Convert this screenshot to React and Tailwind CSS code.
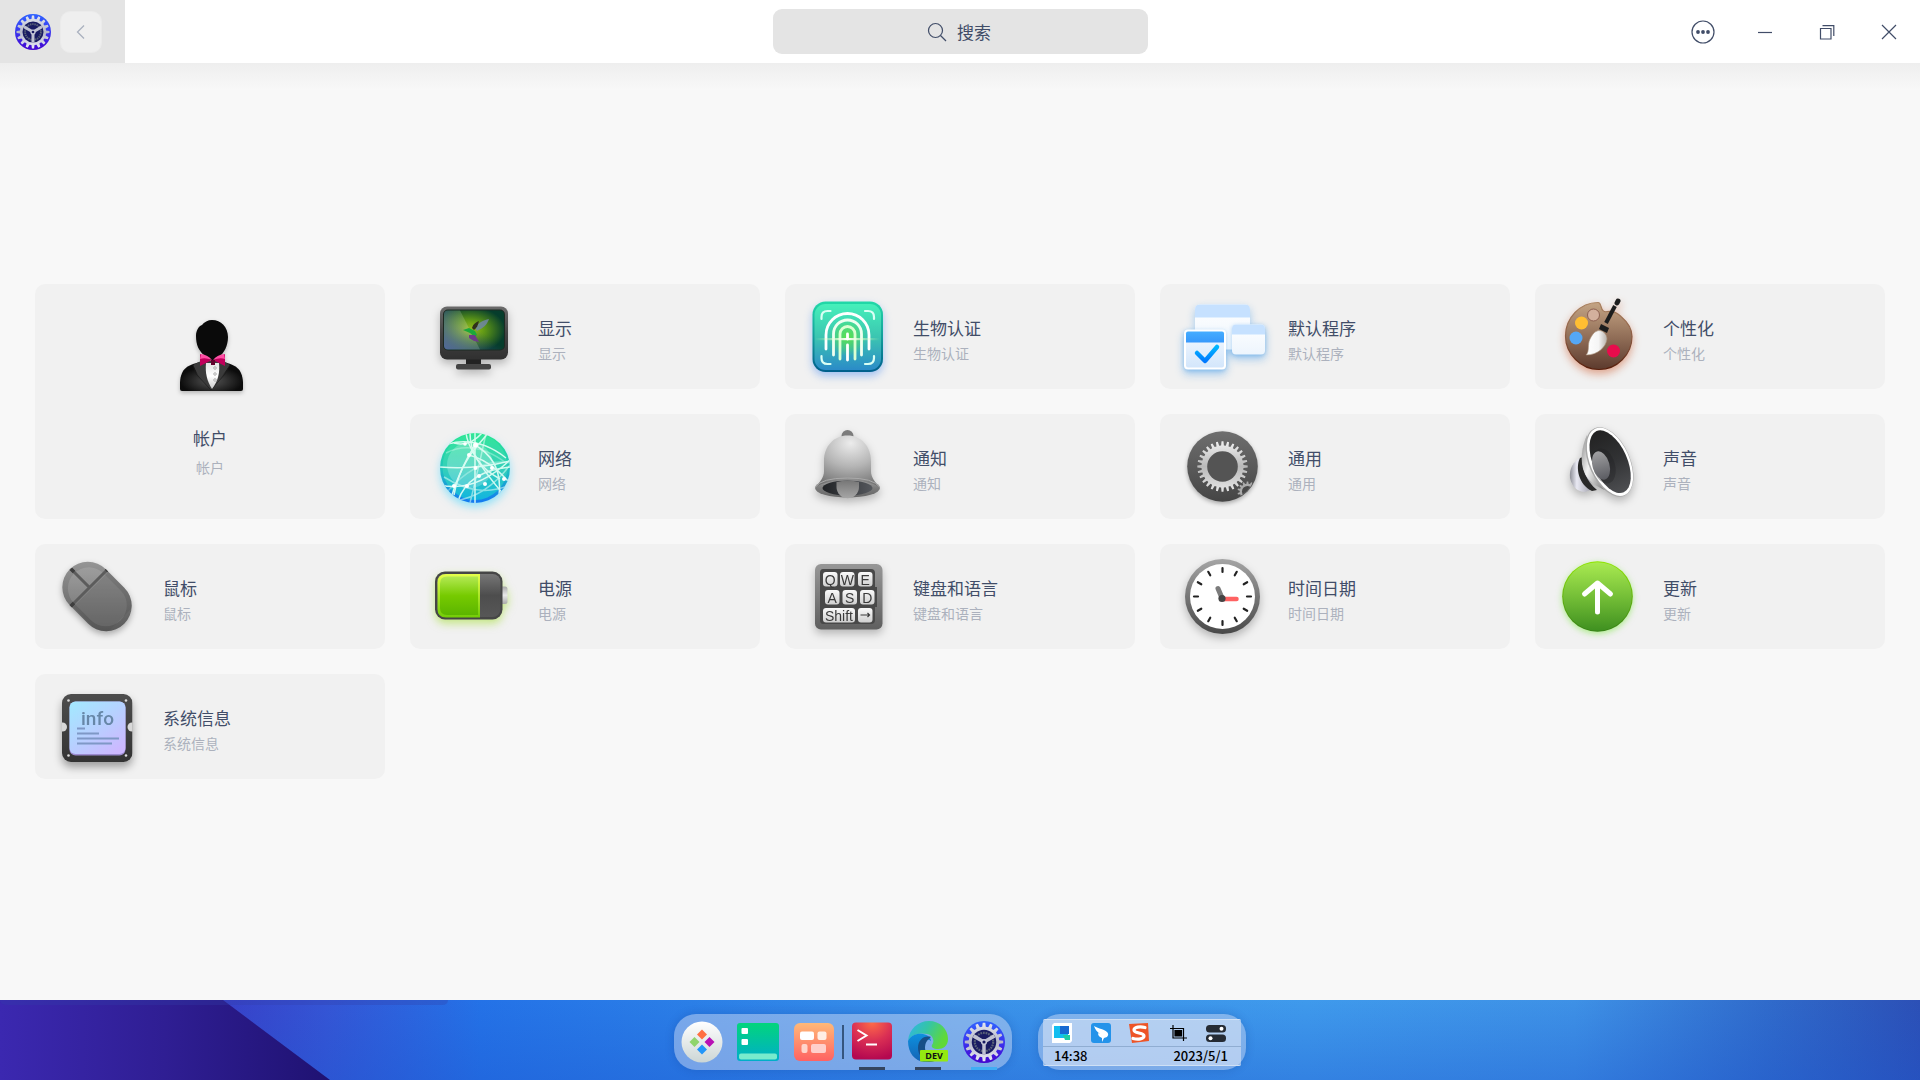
import React, { useState } from "react";

// outline of a cog wheel with n teeth
const cog = (cx, cy, n, outer, inner) => {
	const points = [];
	const step = (Math.PI * 2) / n;
	for (let i = 0; i < n; i++) {
		const a = i * step - Math.PI / 2;
		[
			[-0.3, inner],
			[-0.17, outer],
			[0.17, outer],
			[0.3, inner],
		].forEach(([t, r]) => {
			const x = cx + r * Math.cos(a + t * step);
			const y = cy + r * Math.sin(a + t * step);
			points.push(`${x.toFixed(2)} ${y.toFixed(2)}`);
		});
	}
	return `M${points.join("L")}Z`;
};

const Grad = ({ id, from, to, mid, x2 = 0, y2 = 1 }) => (
	<linearGradient id={id} x1="0" y1="0" x2={x2} y2={y2}>
		<stop offset="0" stopColor={from} />
		{mid && <stop offset="0.5" stopColor={mid} />}
		<stop offset="1" stopColor={to} />
	</linearGradient>
);

const Picture = ({ shadow = "drop-shadow-[0_4px_4px_rgba(0,0,0,0.25)]", children }) => (
	<svg viewBox="0 0 96 96" className={`size-24 shrink-0 ${shadow}`} aria-hidden="true">
		{children}
	</svg>
);

const AccountIcon = () => (
	<Picture shadow="drop-shadow-[0_2px_2px_rgba(0,0,0,0.25)]">
		<defs>
			<radialGradient id="suit" cx="0.5" cy="0.65" r="0.5">
				<stop offset="0" stopColor="#555" />
				<stop offset="1" stopColor="#0c0c0c" />
			</radialGradient>
			<Grad id="shirt" from="#e4e4e4" mid="#fff" to="#c9c9c9" />
		</defs>
		<path d="M38 54C26 57 19 60 18 74v7q0 2 2 2h59q2 0 2-2v-7c-1-14-8-17-19-20Z" fill="url(#suit)" />
		<path d="M39 53 31 57 36 67 49 82 60 68 68 57 61 53Z" fill="#3b3b3b" />
		<path d="M31 57 34 66 49 82M68 57 63 66 49 82" fill="none" stroke="#1a1a1a" strokeWidth="0.7" />
		<path d="M44 55h13c1 10-1 18-7 26-5-8-7-16-6-26Z" fill="url(#shirt)" />
		<path d="M38 46l12 6-12 6ZM63 46l-12 6 12 6Z" fill="#c1005b" />
		<path d="M50 12c9 0 16 7 16 17 0 9-4 16-9 20l-7 4-8-6c-5-4-8-10-8-19 0-6 3-10 6-11 2-3 6-5 10-5Z" fill="#0a0a0a" />
		<path d="M39 46q7 1 11 6-7-3-12-1ZM62 46q-7 1-11 6 7-3 12-1Z" fill="#ff4fa5" />
		<path d="M49 52h4v5h-4Z" fill="#62002c" />
		<g fill="#eee" stroke="#999" strokeWidth="0.7">
			<circle cx="53" cy="60" r="1.3" />
			<circle cx="53" cy="66" r="1.3" />
			<circle cx="53" cy="72" r="1.3" />
		</g>
	</Picture>
);

const DisplayIcon = () => (
	<Picture>
		<defs>
			<Grad id="case" from="#6b6b6b" mid="#444" to="#303030" />
			<radialGradient id="meadow" cx="0.42" cy="0.5" r="0.6">
				<stop offset="0" stopColor="#a4cc12" />
				<stop offset="0.45" stopColor="#5b9417" />
				<stop offset="1" stopColor="#063d2c" />
			</radialGradient>
			<linearGradient id="meadowBlue" x1="0" y1="1" x2="0.6" y2="0.5">
				<stop offset="0" stopColor="#344f87" />
				<stop offset="1" stopColor="#344f87" stopOpacity="0" />
			</linearGradient>
		</defs>
		<path d="M40 70h15v6H40Z" fill="#222" />
		<rect x="30" y="75" width="35" height="5.5" rx="2" fill="#444" />
		<rect x="14" y="17.5" width="68" height="53" rx="7" fill="url(#case)" />
		<rect x="17" y="20.5" width="62" height="41" rx="5" fill="#1d2a22" />
		<rect x="18" y="21.5" width="60" height="39" rx="4" fill="url(#meadow)" />
		<rect x="18" y="21.5" width="60" height="39" rx="4" fill="url(#meadowBlue)" />
		<path d="M22 21.5h12l20 39H22q-4 0-4-4v-31q0-4 4-4Z" fill="#fff" opacity="0.16" />
		<path d="M49 39c3-5 8-8 14-9-2 6-6 9-12 12Z" fill="#7186a5" opacity="0.85" />
		<path d="M46 39c1-4 4-6 7-7-1 4-2 7-5 9Z" fill="#30301b" />
		<path d="M37 41l6-2 6 3 2 4-2 2-5-4Z" fill="#1ba83a" />
		<path d="M43 46l6 0 4 7-5-1-5-3Z" fill="#6d3c88" />
	</Picture>
);

const BiometricIcon = () => (
	<Picture shadow="drop-shadow-[0_4px_4px_rgba(40,120,240,0.4)]">
		<defs>
			<Grad id="padEdge" from="#22d9a8" mid="#129f9b" to="#005f8c" />
			<Grad id="pad" from="#46f0ba" mid="#3bc5b1" to="#2b8bc8" />
			<radialGradient id="padGlow">
				<stop offset="0" stopColor="#5ee53d" stopOpacity="0.9" />
				<stop offset="1" stopColor="#5ee53d" stopOpacity="0" />
			</radialGradient>
			<linearGradient id="beam">
				<stop offset="0" stopColor="#c9ff9e" stopOpacity="0" />
				<stop offset="0.5" stopColor="#fff" />
				<stop offset="1" stopColor="#c9ff9e" stopOpacity="0" />
			</linearGradient>
		</defs>
		<rect x="11.5" y="12.5" width="70.5" height="70.5" rx="13" fill="url(#padEdge)" />
		<rect x="13.5" y="15" width="66.5" height="66" rx="11" fill="url(#pad)" />
		<circle cx="46.5" cy="48" r="19" fill="url(#padGlow)" />
		<g fill="none" strokeLinecap="round" strokeWidth="2.2" stroke="#d9fff4">
			<path d="M20.5 30v-2q0-6 6-6h3M64 22h3q6 0 6 6v2M20.5 67v2q0 6 6 6h3M64 75h3q6 0 6-6v-2" />
		</g>
		<g fill="none" strokeLinecap="round" strokeWidth="2.8" stroke="#fff">
			<path d="M25 60V46a21.5 21.5 0 0 1 43 0v14" />
			<path d="M32.5 66V45a14 14 0 0 1 28 0v21" stroke="#effff0" />
			<path d="M39 70V45a7.5 7.5 0 0 1 15 0v25" stroke="#dcffd2" />
			<path d="M46.5 45v5M46.5 56v15" />
		</g>
		<rect x="14" y="49" width="65" height="2.2" fill="url(#beam)" />
	</Picture>
);

const DefaultAppsIcon = () => (
	<Picture shadow="drop-shadow-[0_4px_4px_rgba(60,150,230,0.45)]">
		<defs>
			<Grad id="sheet" from="#fff" to="#edf5fd" />
			<Grad id="sheetFront" from="#f4f9ff" to="#d3e6fb" />
			<Grad id="tick" from="#00b7ff" to="#0079ff" />
			<Grad id="bar" from="#45adff" to="#3798fb" />
		</defs>
		<rect x="19" y="15.5" width="55" height="45" rx="5" fill="url(#sheet)" />
		<path d="M19 28.5v-8q0-5 5-5h45q5 0 5 5v8Z" fill="#c6e1ff" />
		<rect x="56" y="35.5" width="33" height="30" rx="4" fill="url(#sheet)" className="drop-shadow-[0_1px_2px_rgba(60,150,230,0.4)]" />
		<path d="M56 45.5v-6q0-4 4-4h25q4 0 4 4v6Z" fill="#c6e1ff" />
		<rect x="8" y="40.5" width="42" height="40" rx="4" fill="#fff" className="drop-shadow-[0_1px_2px_rgba(60,150,230,0.4)]" />
		<rect x="10" y="43" width="38" height="35.5" rx="2" fill="url(#sheetFront)" />
		<path d="M10 53.5v-9q0-2 2-2h34q2 0 2 2v9Z" fill="url(#bar)" />
		<path d="M21 64l8 8 12-14" fill="none" stroke="url(#tick)" strokeWidth="4.5" strokeLinecap="round" strokeLinejoin="round" />
	</Picture>
);

const PersonalizationIcon = () => (
	<Picture shadow="drop-shadow-[0_4px_4px_rgba(200,70,20,0.45)]">
		<defs>
			<Grad id="wood" from="#c4a484" mid="#937059" to="#5c3a2d" />
			<Grad id="woodEdge" from="#a9825f" mid="#8d5c43" to="#571e0b" />
			<linearGradient id="bristle">
				<stop offset="0" stopColor="#fff" />
				<stop offset="0.6" stopColor="#f5f5f5" />
				<stop offset="1" stopColor="#b9b1aa" />
			</linearGradient>
		</defs>
		<path
			d="M47 13.5c2 0 2 1 3 4 1 4 3 6 6 5 6-1 10 1 14 5 7 6 11 13 11 20 0 18-15 33-33 33S14.5 65 14.5 47 29 13.5 47 13.5Z"
			fill="url(#wood)"
			stroke="url(#woodEdge)"
			strokeWidth="1.2"
		/>
		<circle cx="42.5" cy="26" r="6" fill="#d3b09d" stroke="#8c5f50" strokeWidth="1" />
		<circle cx="30.5" cy="34" r="6.5" fill="#ffbe32" />
		<circle cx="25" cy="49" r="6.5" fill="#55a7f5" />
		<circle cx="62.5" cy="62" r="6.5" fill="#e80c4c" />
		<path d="M46 42c5-2 10 3 10 8-1 8-9 16-21 16 4-4 1-10 4-16 2-4 4-7 7-8Z" fill="url(#bristle)" stroke="#a79078" strokeWidth="0.6" />
		<path d="M50 35 58 39 56 44 48 40Z" fill="#1d1d1d" />
		<path d="M55 34l9-17" stroke="#1d1d1d" strokeWidth="4" />
		<path d="M66 14l1-2" stroke="#1d1d1d" strokeWidth="5" strokeLinecap="round" />
	</Picture>
);

const NetworkIcon = () => (
	<Picture shadow="drop-shadow-[0_4px_4px_rgba(50,210,255,0.5)]">
		<defs>
			<Grad id="globeEdge" from="#26e88e" mid="#20c5bb" to="#1278f2" />
			<Grad id="globe" from="#32e59a" mid="#35d1b8" to="#12b5df" />
			<clipPath id="globeClip">
				<circle cx="49" cy="49" r="35" />
			</clipPath>
		</defs>
		<circle cx="49" cy="49" r="35" fill="url(#globeEdge)" />
		<ellipse cx="49" cy="48" rx="32.5" ry="33" fill="url(#globe)" />
		<circle cx="44" cy="46" r="23" fill="#fff" opacity="0.22" />
		<g clipPath="url(#globeClip)" fill="none" stroke="#e5fff7" strokeWidth="1.5" opacity="0.9">
			<path d="M14 48q35 3 70-6M22 25q30-8 58 14M28 76q5-28 24-50l12-14M40 14q2 20 38 62" />
			<path d="M49 12v74M49 26Q34 50 26 76M49 26q28 16 24 50M44 14q0 30 30 46" />
			<path d="M14 66q35 8 70-25M32 82q10-30 52-34M42 36q20 4 40 26M56 14q-12 14-28 10" />
			<path d="M18 58q34 22 66 8M60 14q-4 20-16 70M28 82Q60 78 84 46" opacity="0.6" />
			<path d="M20 34q28-14 60 10M22 72q30-34 62-28" opacity="0.4" />
		</g>
		<g fill="#fff">
			<circle cx="49.5" cy="26" r="2.5" />
			<circle cx="39" cy="25" r="1.8" />
			<circle cx="43" cy="36" r="2" />
			<circle cx="49.5" cy="49" r="2" />
			<circle cx="66" cy="49" r="2" />
			<circle cx="53" cy="57" r="2" />
			<circle cx="59" cy="65" r="2" />
			<circle cx="41" cy="67" r="2" />
			<circle cx="28" cy="67" r="2" />
			<circle cx="78" cy="60" r="2" />
		</g>
	</Picture>
);

const BellIcon = () => (
	<Picture>
		<defs>
			<radialGradient id="dome" cx="0.55" cy="0.15" r="0.9">
				<stop offset="0" stopColor="#ececec" />
				<stop offset="0.5" stopColor="#b5b5b5" />
				<stop offset="1" stopColor="#6f6f6f" />
			</radialGradient>
			<Grad id="rim" from="#a5a5a5" mid="#7b7b7b" to="#666" />
			<Grad id="clapper" from="#777" to="#a6a6a6" />
			<linearGradient id="mouth">
				<stop offset="0" stopColor="#202225" />
				<stop offset="1" stopColor="#55585d" />
			</linearGradient>
		</defs>
		<circle cx="46.5" cy="17" r="6" fill="#7c7c7c" />
		<ellipse cx="46.5" cy="69" rx="32.5" ry="9.5" fill="url(#rim)" />
		<path d="M46.5 16.5C60 16.5 70 27 70 42v10c0 7 4 10 8 16-12-9-51-9-63 0 4-6 8-9 8-16V42c0-15 10-25.5 23.5-25.5Z" fill="url(#dome)" />
		<path d="M14.5 68q6-9 32-9t32 9" fill="none" stroke="#a9a9a9" strokeWidth="1" />
		<ellipse cx="46.5" cy="69" rx="25" ry="7.5" fill="url(#mouth)" />
		<path d="M35.5 63q11-3 22.5 0v5a11.2 11.2 0 0 1-22.5 0Z" fill="url(#clapper)" />
	</Picture>
);

const GeneralIcon = () => (
	<Picture shadow="drop-shadow-[0_2px_2px_rgba(0,0,0,0.3)]">
		<defs>
			<Grad id="disc" from="#6e6e6e" to="#454545" />
			<Grad id="steel" from="#f0f0f0" mid="#b9b9b9" to="#e6e6e6" />
			<clipPath id="discClip">
				<circle cx="46.5" cy="47.5" r="34.5" />
			</clipPath>
		</defs>
		<circle cx="46.5" cy="47.5" r="35.3" fill="url(#disc)" />
		<path d={cog(46.5, 47.5, 28, 25.2, 21)} fill="url(#steel)" />
		<circle cx="46.5" cy="47.5" r="15.3" fill="#545454" />
		<g clipPath="url(#discClip)">
			<path d={cog(71.5, 72.5, 14, 10, 7.8)} fill="#aaa" />
			<circle cx="71.5" cy="72.5" r="5.5" fill="#484848" />
		</g>
	</Picture>
);

const SoundIcon = () => (
	<Picture>
		<defs>
			<linearGradient id="magnet">
				<stop offset="0" stopColor="#8e8f98" />
				<stop offset="0.3" stopColor="#e9e9f3" />
				<stop offset="1" stopColor="#9a9aa5" />
			</linearGradient>
			<linearGradient id="horn" x1="0" y1="0" x2="1" y2="0.5">
				<stop offset="0" stopColor="#8c8c8c" />
				<stop offset="0.4" stopColor="#f1f1f1" />
				<stop offset="1" stopColor="#777" />
			</linearGradient>
			<Grad id="cone" from="#222" mid="#313234" to="#4e4f52" />
			<Grad id="cap" from="#a0a0a2" to="#5b5c62" />
		</defs>
		<path d="M30 39c-8 3-12 11-11 20 2 9 8 14 15 14l8-3Z" fill="url(#magnet)" />
		<path d="M29 39c-5 10-1 27 12 33l5-1C35 62 31 50 32 38Z" fill="#292929" />
		<path d="M36 16C31 27 28 43 34 55c5 9 14 15 27 18Z" fill="url(#horn)" />
		<g transform="rotate(-24 58.5 43)">
			<ellipse cx="58.5" cy="43" rx="20.5" ry="37" fill="#a8a8a8" />
			<ellipse cx="59" cy="43" rx="19.5" ry="36.3" fill="#fff" />
			<ellipse cx="59.2" cy="43" rx="17" ry="33.5" fill="url(#cone)" />
		</g>
		<ellipse cx="53" cy="47" rx="11" ry="18" transform="rotate(-16 53 47)" fill="#1f2022" opacity="0.35" />
		<ellipse cx="50" cy="46.5" rx="8.5" ry="14.5" transform="rotate(-16 50 46.5)" fill="url(#cap)" />
	</Picture>
);

const MouseIcon = () => (
	<Picture shadow="drop-shadow-[0_3px_3px_rgba(0,0,0,0.3)]">
		<defs>
			<Grad id="shell" from="#a0a0a0" mid="#777" to="#4c4c4c" />
			<clipPath id="shellClip">
				<rect x="20.5" y="9" width="51" height="77" rx="25.5" transform="rotate(-45 46 47.5)" />
			</clipPath>
		</defs>
		<g clipPath="url(#shellClip)">
			<path d="M0 0h96v96H0Z" fill="url(#shell)" />
			<rect x="25" y="15" width="42" height="66" rx="21" transform="rotate(-45 46 47.5)" fill="#fff" opacity="0.12" />
			<path d="M17 60l44-44M19 19l19 19" stroke="#5c5c5c" strokeWidth="3" />
			<path d="M19 58l4-4M55 22l4-4M20 20l3 3" stroke="#3e3e3e" strokeWidth="3.5" />
			<path d="M22 58l38-38 30 30-38 38Z" fill="#4f4f4f" opacity="0.3" />
		</g>
	</Picture>
);

const PowerIcon = () => (
	<Picture shadow="drop-shadow-[0_4px_4px_rgba(150,220,20,0.5)]">
		<defs>
			<Grad id="cell" from="#767676" mid="#4d4d4d" to="#575757" />
			<Grad id="chargeEdge" from="#e5ff4b" to="#72cc07" />
			<Grad id="charge" from="#b3e952" mid="#76ca00" to="#5cb500" />
			<Grad id="nub" from="#a9a9a9" mid="#e9e9e9" to="#a9a9a9" />
		</defs>
		<rect x="72" y="37.5" width="9.5" height="17.5" rx="2.5" fill="url(#nub)" />
		<rect x="9" y="22.5" width="67.5" height="48" rx="10" fill="#464646" />
		<rect x="11" y="25" width="63.5" height="43" rx="8" fill="url(#cell)" />
		<path d="M54 25v43.5H20q-8.5 0-8.5-8.5V33.5Q11.5 25 20 25Z" fill="url(#chargeEdge)" />
		<path d="M52 27.5v38.5H21q-7 0-7-7V34.5q0-7 7-7Z" fill="url(#charge)" />
	</Picture>
);

const keys = [
	[22, 23, 14.5, "Q"],
	[39, 23, 14.5, "W"],
	[57, 23, 14.5, "E"],
	[24, 41, 14.5, "A"],
	[41.5, 41, 14.5, "S"],
	[59, 41, 14.5, "D"],
	[22, 59, 32, "Shift"],
	[57, 59, 14.5, ""],
];

const KeyboardIcon = () => (
	<Picture>
		<defs>
			<Grad id="board" from="#979797" to="#5f5f5f" />
			<Grad id="key" from="#fafafa" to="#cfcfcf" />
		</defs>
		<rect x="14" y="15" width="67.5" height="65.5" rx="6" fill="url(#board)" />
		<path d="M22 20h48q4 0 4 4v14h2v20h-2v13q0 4-4 4H22q-3 0-3-4V24q0-4 3-4Z" fill="#484848" />
		{keys.map(([x, y, w, label]) => (
			<g key={`${x}-${y}`}>
				<rect x={x} y={y} width={w} height="14.5" rx="3" fill="url(#key)" />
				<text x={x + w / 2} y={y + 12.5} textAnchor="middle" fontSize="14" fontFamily="Liberation Sans, sans-serif" fill="#3a3a3a">
					{label}
				</text>
			</g>
		))}
		<path d="M59.5 66h9m-2-2 2 2-2 2" fill="none" stroke="#3a3a3a" strokeWidth="1.2" />
	</Picture>
);

const ClockIcon = () => (
	<Picture>
		<defs>
			<Grad id="bezel" from="#a5a5a5" to="#484848" />
		</defs>
		<circle cx="46.5" cy="47.5" r="37.5" fill="url(#bezel)" />
		<circle cx="46.5" cy="47.5" r="32.5" fill="#fff" />
		{[...Array(12)].map((_, i) => (
			<path key={i} d="M46.5 19v4" transform={`rotate(${i * 30} 46.5 47.5)`} stroke="#222" strokeWidth="2.2" strokeLinecap="round" />
		))}
		<path d="M46 50h14.5" stroke="#ff6262" strokeWidth="4.5" strokeLinecap="round" />
		<path d="M46 49l-4-9.5" stroke="#7c7c7c" strokeWidth="5" strokeLinecap="round" />
		<circle cx="46" cy="49.5" r="3.6" fill="#444" />
	</Picture>
);

const UpdateIcon = () => (
	<Picture shadow="drop-shadow-[0_2px_3px_rgba(100,230,30,0.5)]">
		<defs>
			<Grad id="leafEdge" from="#90e600" to="#347f14" />
			<Grad id="leaf" from="#a9ea51" mid="#75bf37" to="#3f9020" />
		</defs>
		<circle cx="46.5" cy="47.5" r="35.3" fill="url(#leafEdge)" />
		<circle cx="46.5" cy="47.5" r="34.3" fill="url(#leaf)" />
		<path d="M46.5 63v-29M33.500 45l13-11 13 11" fill="none" stroke="#fff" strokeWidth="5" strokeLinecap="round" strokeLinejoin="round" />
	</Picture>
);

const InfoIcon = () => (
	<Picture shadow="drop-shadow-[0_5px_4px_rgba(0,0,0,0.35)]">
		<defs>
			<Grad id="frame" from="#4d4d4d" to="#333" />
			<Grad id="chip" from="#a2eaff" mid="#b5d2ff" to="#cdb8ff" x2={0.8} />
			<clipPath id="frameClip">
				<rect x="11" y="15" width="70.5" height="68" rx="9" />
			</clipPath>
		</defs>
		<g clipPath="url(#frameClip)">
			<rect x="11" y="15" width="70.5" height="68" fill="url(#frame)" />
			<circle cx="11.5" cy="48" r="4.5" fill="#d8d8d8" />
			<circle cx="81" cy="48" r="4.5" fill="#d8d8d8" />
		</g>
		<g fill="#ddd">
			<circle cx="17.5" cy="21.5" r="1.3" />
			<circle cx="75" cy="21.5" r="1.3" />
			<circle cx="17.5" cy="76.5" r="1.3" />
			<circle cx="75" cy="76.5" r="1.3" />
		</g>
		<rect x="18.5" y="22.5" width="56" height="54" rx="6" fill="#9c8bd0" />
		<rect x="18.5" y="22.5" width="56" height="52.5" rx="6" fill="url(#chip)" />
		<text x="46.500" y="45.500" textAnchor="middle" fontSize="19" fontWeight="500" fontFamily="Roboto, sans-serif" fill="#6787a8">
			info
		</text>
		<path d="M26 49.5h8M26 54.500h22M26 59.500h42M26 64.500h35" stroke="#7f98c6" strokeWidth="2.2" />
	</Picture>
);

const SettingsLogo = ({ id, className }) => (
	<svg viewBox="0 0 48 48" className={className} aria-hidden="true">
		<defs>
			<Grad id={`${id}Disc`} from="#2f63ff" mid="#3a35ef" to="#4404cf" />
			<Grad id={`${id}Steel`} from="#e3e6ee" mid="#b5b8c9" to="#e8e8f5" />
		</defs>
		<circle cx="24" cy="24" r="24" fill={`url(#${id}Disc)`} />
		<path d={cog(24, 24, 16, 22, 17.5)} fill={`url(#${id}Steel)`} />
		<circle cx="24" cy="24" r="14" fill="#191b62" />
		<circle cx="24" cy="24" r="10.5" fill="none" stroke="#596278" strokeWidth="2.5" strokeDasharray="2 1" />
		<path d="M24 24v14M24 24 12 17M24 24l12-7" stroke="#bfc1d2" strokeWidth="4" />
		<circle cx="24" cy="24" r="3.5" fill="#c6c8d8" />
		<circle cx="24" cy="24" r="1.8" fill="#191b62" />
	</svg>
);

const modules = [
	{ name: "显示", Icon: DisplayIcon },
	{ name: "生物认证", Icon: BiometricIcon },
	{ name: "默认程序", Icon: DefaultAppsIcon },
	{ name: "个性化", Icon: PersonalizationIcon },
	{ name: "网络", Icon: NetworkIcon },
	{ name: "通知", Icon: BellIcon },
	{ name: "通用", Icon: GeneralIcon },
	{ name: "声音", Icon: SoundIcon },
	{ name: "鼠标", Icon: MouseIcon },
	{ name: "电源", Icon: PowerIcon },
	{ name: "键盘和语言", Icon: KeyboardIcon },
	{ name: "时间日期", Icon: ClockIcon },
	{ name: "更新", Icon: UpdateIcon },
	{ name: "系统信息", Icon: InfoIcon },
];

const ModuleCard = ({ name, Icon }) => (
	<button className="flex items-center gap-4 rounded-[10px] bg-[#f1f1f1] pl-4 text-left hover:bg-[#e8e8e8]">
		<Icon />
		<span className="flex flex-col pt-1.5">
			<span className="text-[17px] leading-[26px] text-[#414d68]">{name}</span>
			<span className="text-[14px] leading-[24px] text-[#acb1bd]">{name}</span>
		</span>
	</button>
);

const Header = () => {
	const [query, setQuery] = useState("");

	return (
		<header className="flex h-[63px] shrink-0 items-stretch bg-white">
			<div className="flex flex-1">
				<div className="flex w-[125px] items-center gap-[9px] bg-[#e4e4e4] pl-[15px]">
					<SettingsLogo id="titleLogo" className="size-9" />
					<button aria-label="返回" className="flex size-[42px] items-center justify-center rounded-[10px] border border-[#ebebeb] bg-[#efefef]">
						<svg viewBox="0 0 16 16" className="size-4" fill="none" stroke="#aab1bf" strokeWidth="1.3">
							<path d="M11 1.5 4.500 8l6.500 6.500" />
						</svg>
					</button>
				</div>
			</div>
			<label className="flex h-[45px] w-[375px] items-center justify-center gap-[10px] self-center rounded-[9px] bg-[#e4e4e4]">
				<svg viewBox="0 0 20 20" className="size-5" fill="none" stroke="#414d68" strokeWidth="1.2" aria-hidden="true">
					<circle cx="8.5" cy="8.5" r="7" />
					<path d="M13.5 13.5 19 19" />
				</svg>
				<input
					type="text"
					aria-label="搜索"
					placeholder="搜索"
					value={query}
					onChange={(e) => setQuery(e.target.value)}
					className="w-9 bg-transparent text-[17px] leading-[26px] text-[#414d68] outline-none placeholder:text-[#414d68]"
				/>
			</label>
			<div className="flex flex-1 justify-end text-[#414d68]">
				<button aria-label="菜单" className="flex w-[62px] items-center justify-center">
					<svg viewBox="0 0 24 24" className="size-6">
						<circle cx="12" cy="12" r="11" fill="none" stroke="currentColor" strokeWidth="1.2" />
						<circle cx="7" cy="12" r="1.9" fill="currentColor" />
						<circle cx="12" cy="12" r="1.9" fill="currentColor" />
						<circle cx="17" cy="12" r="1.9" fill="currentColor" />
					</svg>
				</button>
				<button aria-label="最小化" className="flex w-[62px] items-center justify-center">
					<svg viewBox="0 0 16 16" className="size-4" stroke="currentColor" strokeWidth="1.2">
						<path d="M1 8.5h14" />
					</svg>
				</button>
				<button aria-label="还原" className="flex w-[62px] items-center justify-center">
					<svg viewBox="0 0 16 16" className="size-4" fill="none" stroke="currentColor" strokeWidth="1.2">
						<path d="M1.5 4.5h10.5v10.5H1.5ZM3.500 1.7h11.300V12" />
					</svg>
				</button>
				<button aria-label="关闭" className="flex w-[62px] items-center justify-center">
					<svg viewBox="0 0 16 16" className="size-4" stroke="currentColor" strokeWidth="1.2">
						<path d="M1 1l14 14M15 1 1 15" />
					</svg>
				</button>
			</div>
		</header>
	);
};

const LauncherIcon = () => (
	<svg viewBox="0 0 42 42" className="size-[42px]" aria-hidden="true">
		<defs>
			<Grad id="launch" from="#fff" to="#ccd6d5" />
		</defs>
		<circle cx="21" cy="21" r="20.5" fill="url(#launch)" />
		<path d="M21 8.5l5 5-5 5-5-5Z" fill="#ff7043" />
		<path d="M13.5 16l5 5-5 5-5-5Z" fill="#8fd46b" />
		<path d="M28.5 16l5 5-5 5-5-5Z" fill="#b810b4" />
		<path d="M21 23.5l5 5-5 5-5-5Z" fill="#2196f9" />
	</svg>
);

const TasksIcon = () => (
	<svg viewBox="0 0 42 42" className="size-[42px]" aria-hidden="true">
		<defs>
			<Grad id="tasks" from="#02d57c" to="#00aec9" />
		</defs>
		<rect y="2" width="42" height="38" rx="3" fill="url(#tasks)" />
		<rect x="4.5" y="7" width="6.5" height="6" rx="1" fill="#fff" />
		<rect x="4.5" y="18" width="6.5" height="6" rx="1" fill="#fff" />
		<rect x="2" y="32.5" width="38" height="6" rx="2" fill="#78ebcd" />
	</svg>
);

const AppsIcon = () => (
	<svg viewBox="0 0 42 42" className="size-[42px]" aria-hidden="true">
		<defs>
			<Grad id="apps" from="#ffb978" to="#ff6262" />
		</defs>
		<rect x="1" y="2" width="40" height="38" rx="6" fill="url(#apps)" />
		<rect x="7" y="10.5" width="14" height="8.5" rx="2" fill="#fff" />
		<rect x="24.5" y="10.5" width="9" height="8.5" rx="2" fill="#ffeee5" />
		<rect x="8.5" y="23" width="6" height="9" rx="2" fill="#ffd5cb" />
		<rect x="18" y="23" width="15" height="9" rx="2" fill="#ffd0cb" />
	</svg>
);

const TerminalIcon = () => (
	<svg viewBox="0 0 42 42" className="size-[42px]" aria-hidden="true">
		<defs>
			<radialGradient id="term" cx="0.5" cy="0" r="1">
				<stop offset="0" stopColor="#ff6b47" />
				<stop offset="0.5" stopColor="#da2f54" />
				<stop offset="1" stopColor="#b40850" />
			</radialGradient>
		</defs>
		<rect x="1" y="1.5" width="40" height="37" rx="4" fill="url(#term)" />
		<path d="M6.5 9l9 5.5-9 5.5M15 23.5h11" fill="none" stroke="#fff" strokeWidth="2" />
	</svg>
);

const EdgeIcon = () => (
	<svg viewBox="0 0 42 42" className="size-[42px]" aria-hidden="true">
		<defs>
			<Grad id="edgeTop" from="#2fb2ee" mid="#35c5a5" to="#60d937" x2={1} y2={0.4} />
			<Grad id="edgeBody" from="#0d90df" to="#1463b4" />
		</defs>
		<path d="M1 20C2 8 11 0 22 0c11 0 19 8 19 18 0 7-5 10-10 10s-7-2-6-4c3-4 1-10-5-11C11 11 4 14 1 20Z" fill="url(#edgeTop)" />
		<path d="M1 20c3-6 9-8 15-7 5 1 8 4 8 7-4-3-9 0-9 7 0 7 6 11 13 11-4 3-8 3-11 3C8 40 1 32 1 20Z" fill="url(#edgeBody)" />
		<path d="M24 16c-7-2-13 3-13 11 0 7 5 13 11 14 4 0 9-2 12-5-9 2-16-3-16-9 0-5 2-8 6-11Z" fill="#174f87" />
		<rect x="13" y="29" width="28" height="11.5" rx="1" fill="#94e911" />
		<text x="27" y="38" textAnchor="middle" fontSize="9" fontWeight="700" fontFamily="Open Sans, sans-serif" fill="#111">
			DEV
		</text>
	</svg>
);

const DockItem = ({ label, indicator, children }) => (
	<button aria-label={label} className="flex h-14 w-14 flex-col items-center pt-[7px]">
		{children}
		{indicator && <span className={`mt-1 h-[3px] w-[26px] shrink-0 ${indicator}`} />}
	</button>
);

const Wallpaper = () => (
	<svg viewBox="0 0 1920 80" preserveAspectRatio="none" className="absolute inset-0 size-full" aria-hidden="true">
		<defs>
			<linearGradient id="sky">
				<stop offset="0.1" stopColor="#393ac4" />
				<stop offset="0.17" stopColor="#3555d5" />
				<stop offset="0.25" stopColor="#2472e7" />
				<stop offset="0.36" stopColor="#2b7fe7" />
				<stop offset="0.5" stopColor="#3a92e9" />
				<stop offset="0.68" stopColor="#3f9aec" />
				<stop offset="0.82" stopColor="#3e91e6" />
				<stop offset="0.92" stopColor="#306bcb" />
				<stop offset="1" stopColor="#2c50b6" />
			</linearGradient>
			<linearGradient id="dusk" x1="0" y1="0" x2="0" y2="1">
				<stop offset="0" stopColor="#1c55cf" stopOpacity="0" />
				<stop offset="1" stopColor="#1c55cf" stopOpacity="0.35" />
			</linearGradient>
			<linearGradient id="ridge">
				<stop offset="0" stopColor="#3b28b0" />
				<stop offset="0.5" stopColor="#2f1e93" />
				<stop offset="1" stopColor="#1f1272" />
			</linearGradient>
		</defs>
		<path d="M0 0h1920v80H0Z" fill="url(#sky)" />
		<path d="M0 0h1920v80H0Z" fill="url(#dusk)" />
		<path d="M0 0h223l107 80H0Z" fill="url(#ridge)" />
		<path d="M0 0h448q0 5-6 5H8q-8 0-8-5Z" fill="#3340a8" opacity="0.3" />
	</svg>
);

const Taskbar = () => (
	<footer className="relative flex h-20 shrink-0 justify-center overflow-hidden">
		<Wallpaper />
		<div className="relative mt-[14px] flex h-14 gap-[26px]">
			<nav className="flex items-start rounded-[22px] bg-[#c5d3ef]/50 shadow-[0_0_10px_rgba(0,40,120,0.2)]">
				<DockItem label="启动器">
					<LauncherIcon />
				</DockItem>
				<DockItem label="多任务视图">
					<TasksIcon />
				</DockItem>
				<DockItem label="应用">
					<AppsIcon />
				</DockItem>
				<span className="mt-[11px] h-[34px] w-[2px] bg-[#35567f]" />
				<DockItem label="终端" indicator="bg-[#34455f]">
					<TerminalIcon />
				</DockItem>
				<DockItem label="浏览器" indicator="bg-[#34455f]">
					<EdgeIcon />
				</DockItem>
				<DockItem label="控制中心" indicator="bg-[#41adf4]">
					<SettingsLogo id="dockLogo" className="size-[42px]" />
				</DockItem>
			</nav>
			<div className="flex w-[208px] items-center justify-center rounded-[22px] bg-[#c5d3ef]/50 shadow-[0_0_10px_rgba(0,40,120,0.2)]">
				<div className="mx-[5px] flex h-[47px] flex-1 flex-col rounded-[2px] border-y border-[#cfe0f5] bg-[#dfe7f5]/55">
					<div className="flex h-7 items-center justify-between border-b border-[#90add2] pr-[15px] pl-[9px]">
						<button aria-label="桌面">
							<svg viewBox="0 0 20 20" className="size-5">
								<path d="M0 2 2 0h18v18l-2 2H0Z" fill="#fff" />
								<path d="M2 3h14v12H2Z" fill="#12bdf0" />
								<path d="M8 3h9v8H8Z" fill="#1769d2" />
								<path d="M11 12h7v5h-5Z" fill="#20cba5" />
							</svg>
						</button>
						<button aria-label="飞鸟">
							<svg viewBox="0 0 20 20" className="size-5">
								<rect width="20" height="20" rx="3" fill="#2493ea" />
								<path d="M3 3c5 3 10 3 13 6 2 2 1 4 0 5l-3 1-2 4v-4c-3-1-4-3-4-5l2 1C6 9 4 6 3 3Z" fill="#fff" />
							</svg>
						</button>
						<button aria-label="输入法">
							<svg viewBox="0 0 20 20" className="size-5">
								<path d="M0 1 19 0l1 18-17 2Z" fill="#ed5427" />
								<path d="M16 4.5C11 3 5 4 5 7c0 4 10 2 10 6 0 3-6 4-11 2.5" fill="none" stroke="#fff" strokeWidth="3.2" strokeLinecap="round" />
							</svg>
						</button>
						<button aria-label="截图">
							<svg viewBox="0 0 20 20" className="size-5" fill="none" stroke="#000" strokeWidth="1.2">
								<path d="M5 2v13h14M2 5.500h13.500V18" />
								<path d="M7 7.500h6.500v5.500H7Z" fill="#000" />
							</svg>
						</button>
						<button aria-label="快捷设置">
							<svg viewBox="0 0 20 20" className="size-5">
								<rect y="2" width="20" height="7.5" rx="3.5" fill="#252b34" />
								<rect y="11.5" width="20" height="7.5" rx="3.5" fill="#252b34" />
								<circle cx="15.5" cy="5.7" r="2" fill="#fff" />
								<circle cx="4.5" cy="15.3" r="2" fill="#fff" />
							</svg>
						</button>
					</div>
					<div className="flex items-center justify-between pr-[13px] pl-[11px] text-[13px] leading-[18px] font-medium text-black">
						<time>14:38</time>
						<time>2023/5/1</time>
					</div>
				</div>
			</div>
		</div>
	</footer>
);

export default function App() {
	return (
		<div className="flex min-h-screen flex-col bg-[#f8f8f8] font-['Noto_Sans_CJK_SC',sans-serif]">
			<Header />
			<div className="h-[27px] shrink-0 bg-linear-to-b from-[#eeeeee] to-[#f8f8f8]" />
			<main className="flex flex-1 flex-col justify-center px-[35px] pb-[27px]">
				<div className="grid auto-rows-[105px] grid-cols-5 gap-[25px]">
					<button className="row-span-2 flex flex-col items-center rounded-[10px] bg-[#f1f1f1] pt-6 hover:bg-[#e8e8e8]">
						<AccountIcon />
						<span className="mt-[21px] text-[17px] leading-[26px] text-[#414d68]">帐户</span>
						<span className="mt-1 text-[14px] leading-[24px] text-[#acb1bd]">帐户</span>
					</button>
					{modules.map((item) => (
						<ModuleCard key={item.name} {...item} />
					))}
				</div>
			</main>
			<Taskbar />
		</div>
	);
}
